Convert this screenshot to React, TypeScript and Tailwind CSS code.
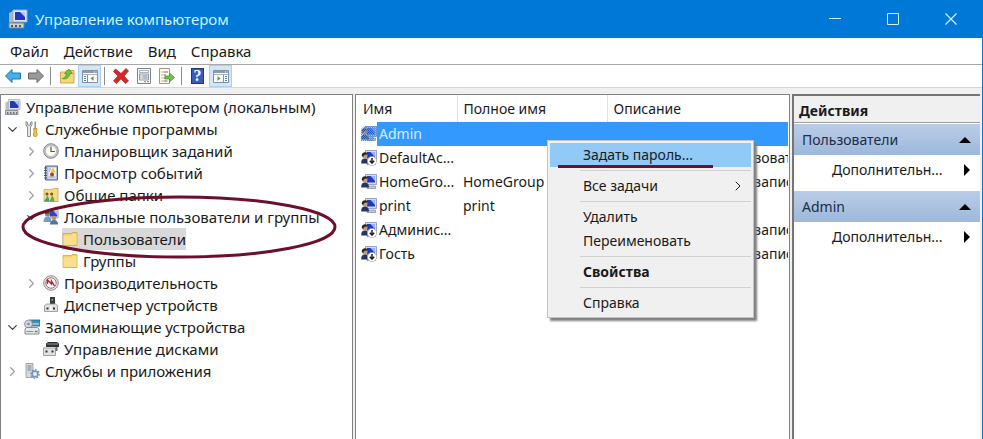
import React, { useState } from 'react';
import { ChevronDown, ChevronRight } from 'lucide-react';
import clsx from 'clsx';

interface TreeNode {
  label: string;
  depth: number;
  icon: React.ReactNode;
  state?: 'open' | 'closed';
}

interface LocalUser {
  name: string;
  fullName: string;
  description: string;
  disabled?: boolean;
}

const Icon: React.FC<{ children: React.ReactNode }> = ({ children }) => (
  <svg viewBox="0 0 16 16" className="h-4 w-4 shrink-0" aria-hidden="true">
    {children}
  </svg>
);

const ComputerIcon = () => (
  <Icon>
    <path d="M.5 3.500l3-1.500v9h-3z" fill="#b9bdc2" />
    <path d="M3.500.5h11.500v10H3.500z" fill="#dfe3ea" stroke="#a9afb8" strokeWidth=".8" />
    <path d="M5 2h8.500v7H5z" fill="#2337b8" />
    <path d="M9 2h4.500v5z" fill="#a9c0ff" />
    <path d="M.5 11.500h12.500v4H.5z" fill="#cfd2d6" stroke="#777d84" strokeWidth=".8" />
    <path d="M2 14h1.500M5 14h1.500M8 14h1.500M11 14h1" stroke="#4d535a" strokeWidth="1.500" />
  </Icon>
);

const ToolsIcon = () => (
  <Icon>
    <path d="M2 .5v3.500L3.500 6v9.500h3V6L8 4V.5L6.500 1.500v2.500h-3v-2.500z" fill="#e4e6e8" stroke="#7f8589" strokeWidth=".9" />
    <path d="M10.500.5h1.500v7h-1.500z" fill="#8a9094" />
    <path d="M9.500 7.500h3.500l-.5 3 .8 3.500-1 1.500h-2l-1-1.500.7-3.500z" fill="#f0c63c" stroke="#b78d1d" strokeWidth=".8" />
  </Icon>
);

const ClockIcon = () => (
  <Icon>
    <circle cx="8" cy="8" r="7.300" fill="#c9cbcd" stroke="#85898d" />
    <circle cx="8" cy="8" r="5.500" fill="#fdfdf4" stroke="#a5a8aa" strokeWidth=".7" />
    <path d="M8 3.500V8.500H12" fill="none" stroke="#4f5961" strokeWidth="1.200" />
  </Icon>
);

const EventIcon = () => (
  <Icon>
    <path d="M2.500 1h12v14h-12z" fill="#a9c0dd" stroke="#566a87" />
    <path d="M5.500 2.500h7.500v11H5.500z" fill="#f1f4f8" />
    <path d="M1 3h3M1 5.500h3M1 8h3M1 10.500h3M1 13h3" stroke="#4a5666" />
    <path d="M6 12h6.500M6 4h2M6 6h1" stroke="#8292a8" />
    <path d="M10 2.500l2.800 5H7.200z" fill="#f5c52c" />
    <circle cx="9" cy="9.500" r="2" fill="#cf3038" />
  </Icon>
);

const FolderIcon = () => (
  <Icon>
    <path d="M1 2.500h8l1.200-1H15v13H1z" fill="#f3cf6b" stroke="#d0a445" strokeWidth=".8" />
    <path d="M1.500 4.500h8l1-1.500h4v11h-13z" fill="#fbdf8c" />
  </Icon>
);

const SharedFolderIcon = () => (
  <Icon>
    <path d="M1 2.500h8l1.200-1H15v13H1z" fill="#f7d97f" stroke="#cda447" strokeWidth=".8" />
    <circle cx="4" cy="7" r="1.500" fill="#735032" />
    <circle cx="8.700" cy="7" r="1.500" fill="#735032" />
    <path d="M1 14.500c0-1 2.500-2.500 3-5.500 1.500 0 1.800 2 2.500 5.500z" fill="#3f9c82" />
    <path d="M6.500 14.500c0-1 1.800-2.500 2.200-5.500 1.500 0 2.300 2 2.800 5.500z" fill="#4fae4b" />
  </Icon>
);

const GroupIcon = () => (
  <Icon>
    <path d="M5.500.5h9.500v8.500H5.500z" fill="#d9dee7" stroke="#9299a8" strokeWidth=".8" />
    <path d="M7 2h7v5.500H7z" fill="#2b45c4" />
    <path d="M10.500 2H14v4z" fill="#a9bcff" />
    <circle cx="4.500" cy="5" r="2.500" fill="#a77b58" />
    <path d="M2 5c0-3.500 4.500-3.500 5-.5-2-.5-3 0-5 .5z" fill="#41332c" />
    <path d="M.5 13c0-3.500 1.500-5.500 4-5.500s4 2 4 5.500z" fill="#6f9ecb" />
    <circle cx="11" cy="9" r="2.200" fill="#b98e6e" />
    <path d="M7 15.500c0-3 1.500-4.500 4-4.500s4 1.500 4 4.500z" fill="#557593" />
  </Icon>
);

const PerformanceIcon = () => (
  <Icon>
    <circle cx="8" cy="8" r="7.300" fill="#e4e4e4" stroke="#8d8d8d" />
    <circle cx="8" cy="8" r="5.200" fill="#fff" stroke="#9a4a50" strokeWidth=".8" />
    <path d="M4.500 9V5l4 4V6l3 5" fill="none" stroke="#bd222c" strokeWidth="1.400" />
  </Icon>
);

const DeviceIcon = () => (
  <Icon>
    <path d="M7 0h5v7H7z" fill="#3a3d40" />
    <path d="M8.500 2h1.500v1.500H8.500z" fill="#a9adb0" />
    <path d="M1.500 8.500l2-1.500h9l2 1.500v6h-13z" fill="#dfe1e3" stroke="#8b8f92" strokeWidth=".8" />
    <path d="M3.500 10.500h2v2h-2zM10 10.500h2v2h-2z" fill="#33373a" />
    <path d="M7 8.500h1.500v5.500H7z" fill="#fff" />
  </Icon>
);

const StorageIcon = () => (
  <Icon>
    <path d="M5 1h11v6H5z" fill="#279ac6" stroke="#4b5a62" strokeWidth=".8" />
    <path d="M8 5h7" stroke="#d8f2ff" />
    <circle cx="4.500" cy="5" r="4" fill="#cfd6da" stroke="#818a90" strokeWidth=".8" />
    <circle cx="4.500" cy="5" r="1.300" fill="#4aa4c4" />
    <path d="M1 10l1.500-1.500h11L15 10v5H1z" fill="#e5e8ea" stroke="#6c7377" strokeWidth=".8" />
    <path d="M2.500 12.500h7" stroke="#8c9398" />
    <path d="M11 12.500h2.500" stroke="#36a13c" strokeWidth="1.500" />
  </Icon>
);

const DiskIcon = () => (
  <Icon>
    <path d="M3 2.500L5 1h9l2 1.500V6H3z" fill="#303336" />
    <path d="M4 3h11" stroke="#8f9396" />
    <path d="M.5 7h12v7.500H.5z" fill="#dfe1e3" stroke="#8b8f92" strokeWidth=".8" />
    <path d="M2.500 9.500h2v2h-2zM8.500 9.500h2v2h-2z" fill="#33373a" />
    <path d="M12.500 6h2v4h-2z" fill="#6a6e71" />
  </Icon>
);

const ServicesIcon = () => (
  <Icon>
    <path d="M2 .5h7v14H2z" fill="#d5dade" stroke="#8c959c" strokeWidth=".8" />
    <path d="M3.500 3h4M3.500 5h4M3.500 7h4" stroke="#7b858d" />
    <circle cx="11" cy="11" r="3" fill="#c9dcf0" stroke="#6d93bd" strokeWidth="1.500" />
    <circle cx="11" cy="11" r="4.300" fill="none" stroke="#6d93bd" strokeWidth="1.200" strokeDasharray="1.600 1.700" />
    <circle cx="11" cy="11" r="1.100" fill="#fff" />
  </Icon>
);

const UserIcon: React.FC<{ disabled?: boolean; selected?: boolean }> = ({ disabled, selected }) => (
  <Icon>
    <path d="M4.500.5h11v10h-11z" fill="#d5daea" stroke="#8890b0" strokeWidth=".8" />
    <path d="M6 2h8v6.500H6z" fill="#2038bd" />
    <path d="M9.500 2H14v5z" fill="#9cb4ff" />
    <path d="M6 12h8.500v2.500H6z" fill="#c5c8d2" stroke="#80859a" strokeWidth=".7" />
    <circle cx="3.800" cy="5.500" r="2.700" fill="#c79b7a" />
    <path d="M.8 6c-.5-4.500 5.500-5 6-1.500-2 0-4 0-4.500 2.500z" fill="#2f2326" />
    <path d="M.2 13.500c0-3.500 1-5 3.600-5s4.200 1.500 4.200 5z" fill="#26345f" />
    {disabled && (
      <>
        <circle cx="11" cy="11" r="4.600" fill="#fff" stroke="#a6a6a6" strokeWidth=".7" />
        <path d="M11 8v5M8.800 10.800L11 13.200l2.200-2.400" fill="none" stroke="#222" strokeWidth="1.500" />
      </>
    )}
    {selected && (
      <>
        <defs>
          <pattern id="dither" width="2" height="2" patternUnits="userSpaceOnUse">
            <path d="M0 0h1v1H0zM1 1h1v1H1z" fill="#3399ff" />
          </pattern>
        </defs>
        <path d="M4 0h12v11h-3v4H0V3z" fill="#3399ff" opacity=".35" />
        <path d="M4 0h12v11h-3v4H0V3z" fill="url(#dither)" />
      </>
    )}
  </Icon>
);

const ArrowIcon: React.FC<{ forward?: boolean }> = ({ forward }) => (
  <Icon>
    <path
      d={forward ? 'M15.500 8L9 1.500v3.500H.5v6H9v3.500z' : 'M.5 8L7 1.500v3.500h8.500v6H7v3.500z'}
      fill={forward ? '#9a9a9a' : '#45b0ea'}
      stroke={forward ? '#666' : '#1976ad'}
    />
  </Icon>
);

const UpFolderIcon = () => (
  <Icon>
    <path d="M1.500 4h5l1-1.500h7.500V15H1.500z" fill="#f6d77b" stroke="#c7a146" strokeWidth=".9" />
    <path d="M3 10.500c2 0 4-2 4.500-5H5.500L10 1l3.500 4.500h-2.500c-.5 4-4 6.500-8 5z" fill="#6cc340" stroke="#478f2a" strokeWidth=".7" />
  </Icon>
);

const PaneIcon: React.FC<{ right?: boolean }> = ({ right }) => (
  <Icon>
    <path d="M.5 2.500h15v12H.5z" fill="#fff" stroke="#8590a0" />
    <path d="M1 3h14v2H1z" fill="#8f9bab" />
    <path d="M1 6.500h14" stroke="#a9b2bf" />
    <path d="M12 4h1M14 4h.5" stroke="#fff" />
    <path d={right ? 'M10.500 7v7' : 'M5.500 7v7'} stroke="#8590a0" />
    <path d={right ? 'M12 8.500h2M12 10.500h2M12 12.500h2' : 'M2 8.500h2M2 10.500h2M2 12.500h2'} stroke="#4b86c8" />
    <path d={right ? 'M4.500 8v5L7.500 10.500z' : 'M11.500 8v5L8.500 10.500z'} fill="#42a83c" />
  </Icon>
);

const DeleteIcon = () => (
  <Icon>
    <path d="M2.500 1L8 5.500 13 .5 15.500 3 11 8l4.500 5-3 2.500L8 10.800 3.500 15.500 .5 13 5 8 .5 3.500z" fill="#dc2626" stroke="#9c1a1a" strokeWidth=".7" />
  </Icon>
);

const PropertiesIcon = () => (
  <Icon>
    <path d="M1.500.5h13v15h-13z" fill="#fafafa" stroke="#7c858e" />
    <path d="M3.500 2.500h9v2h-9z" fill="none" stroke="#98a2ac" strokeWidth=".8" />
    <path d="M3.500 6h9v6h-9z" fill="#eef1f4" stroke="#7c858e" strokeWidth=".8" />
    <path d="M4.500 8h1M6.500 8h5M4.500 10h1M6.500 10h5M8 13.700h2M11 13.700h2" stroke="#7c858e" />
  </Icon>
);

const ExportIcon = () => (
  <Icon>
    <path d="M.5.5h10v15H.5z" fill="#fffbe9" stroke="#9c9a83" />
    <path d="M2.500 4h1M4.500 4h4.500M2.500 7h1M4.500 7H7M2.500 10h1M4.500 10H6M2.500 13h1M4.500 13h4" stroke="#69758a" />
    <path d="M6 8h4.500V5l5 4.500-5 4.500v-3H6z" fill="#6cc93f" stroke="#3f8f2b" strokeWidth=".7" />
  </Icon>
);

const HelpIcon = () => (
  <span className="flex h-4 w-[13px] items-center justify-center border border-[#22367c] bg-[#3a5bbd] font-['Liberation_Serif',serif] text-base font-bold leading-4 text-white">?</span>
);

const TREE: TreeNode[] = [
  { label: 'Управление компьютером (локальным)', depth: 0, icon: <ComputerIcon /> },
  { label: 'Служебные программы', depth: 1, icon: <ToolsIcon />, state: 'open' },
  { label: 'Планировщик заданий', depth: 2, icon: <ClockIcon />, state: 'closed' },
  { label: 'Просмотр событий', depth: 2, icon: <EventIcon />, state: 'closed' },
  { label: 'Общие папки', depth: 2, icon: <SharedFolderIcon />, state: 'closed' },
  { label: 'Локальные пользователи и группы', depth: 2, icon: <GroupIcon />, state: 'open' },
  { label: 'Пользователи', depth: 3, icon: <FolderIcon /> },
  { label: 'Группы', depth: 3, icon: <FolderIcon /> },
  { label: 'Производительность', depth: 2, icon: <PerformanceIcon />, state: 'closed' },
  { label: 'Диспетчер устройств', depth: 2, icon: <DeviceIcon /> },
  { label: 'Запоминающие устройства', depth: 1, icon: <StorageIcon />, state: 'open' },
  { label: 'Управление дисками', depth: 2, icon: <DiskIcon /> },
  { label: 'Службы и приложения', depth: 1, icon: <ServicesIcon />, state: 'closed' },
];

const USERS: LocalUser[] = [
  { name: 'Admin', fullName: '', description: '' },
  { name: 'DefaultAc...', fullName: '', description: 'Учетная запись пользователя', disabled: true },
  { name: 'HomeGro...', fullName: 'HomeGroup', description: 'Встроенная учетная запись' },
  { name: 'print', fullName: 'print', description: '' },
  { name: 'Админис...', fullName: '', description: 'Встроенная учетная запись', disabled: true },
  { name: 'Гость', fullName: '', description: 'Встроенная учетная запись', disabled: true },
];

// Left padding per tree level, level 0 has no expander
const INDENT = ['pl-1', 'pl-1', 'pl-[23px]', 'pl-[42px]'];

const TitleBar = () => (
  <header className="flex h-[38px] items-center bg-[#0078d7] pl-2 text-[#c9f4ff]">
    <svg viewBox="0 0 20 20" className="h-5 w-5" aria-hidden="true">
      <path d="M1 4l4-2v12H1z" fill="#a9b4bf" />
      <path d="M5 1h14v12H5z" fill="#dfe6f2" stroke="#9eabbb" />
      <path d="M7 3h10v8H7z" fill="#2036bd" />
      <path d="M12 3h5v5z" fill="#b3c8ff" />
      <path d="M1 14h15v5H1z" fill="#cfd2d2" stroke="#73818c" />
      <path d="M3 17h2M7 17h2M11 17h2" stroke="#57534a" strokeWidth="2" />
    </svg>
    <h1 className="ml-[7px] flex-1">Управление компьютером</h1>
    <button type="button" aria-label="Свернуть" className="flex h-full w-[58px] items-center justify-center">
      <svg viewBox="0 0 12 12" className="h-3 w-3"><path d="M0 5.500h12" stroke="currentColor" /></svg>
    </button>
    <button type="button" aria-label="Развернуть" className="flex h-full w-[58px] items-center justify-center">
      <svg viewBox="0 0 12 12" className="h-3 w-3"><path d="M.5.5h11v11H.5z" fill="none" stroke="currentColor" /></svg>
    </button>
    <button type="button" aria-label="Закрыть" className="mr-[2px] flex h-full w-[58px] items-center justify-center">
      <svg viewBox="0 0 12 12" className="h-3 w-3"><path d="M.5.5l11 11M11.500.5l-11 11" stroke="currentColor" strokeWidth="1.200" /></svg>
    </button>
  </header>
);

const ToolButton: React.FC<{ label: string; pressed?: boolean; children: React.ReactNode }> = ({ label, pressed, children }) => (
  <button
    type="button"
    aria-label={label}
    className={clsx(
      'flex h-[22px] w-[23px] items-center justify-center border',
      pressed ? 'border-[#a9d0f0] bg-[#d3e6f7]' : 'border-transparent'
    )}
  >
    {children}
  </button>
);

const ToolDivider = () => <span className="ml-[3px] mr-1 h-[18px] w-px bg-[#8c8c8c]" />;

const Toolbar = () => (
  <div className="flex h-[23px] items-center border-b border-[#d5d5d5] pl-px">
    <ToolButton label="Назад"><ArrowIcon /></ToolButton>
    <ToolButton label="Вперед"><ArrowIcon forward /></ToolButton>
    <ToolDivider />
    <ToolButton label="Вверх"><UpFolderIcon /></ToolButton>
    <ToolButton label="Дерево консоли" pressed><PaneIcon /></ToolButton>
    <ToolDivider />
    <ToolButton label="Удалить"><DeleteIcon /></ToolButton>
    <ToolButton label="Свойства"><PropertiesIcon /></ToolButton>
    <ToolButton label="Экспорт списка"><ExportIcon /></ToolButton>
    <ToolDivider />
    <ToolButton label="Справка"><HelpIcon /></ToolButton>
    <ToolButton label="Панель действий" pressed><PaneIcon right /></ToolButton>
  </div>
);

const ConsoleTree = () => {
  const [selected, setSelected] = useState('Пользователи');

  return (
    <nav className="relative w-[353px] shrink-0 border border-b-0 border-[#828282] bg-white pt-px">
      <ul>
        {TREE.map(node => (
          <li key={node.label} className={clsx('flex h-[22px] items-center', INDENT[node.depth])}>
            {node.depth > 0 && (
              <span className="flex w-[19px] shrink-0 items-center">
                {node.state === 'open' && (
                  <button type="button" aria-label="Свернуть узел"><ChevronDown size={15} className="text-[#404040]" /></button>
                )}
                {node.state === 'closed' && (
                  <button type="button" aria-label="Развернуть узел"><ChevronRight size={15} className="text-[#a0a0a0]" /></button>
                )}
              </span>
            )}
            <button
              type="button"
              onClick={() => setSelected(node.label)}
              className={clsx('flex h-[22px] items-center gap-[5px] whitespace-nowrap', selected === node.label && 'bg-[#d9d9d9]')}
            >
              {node.icon}
              {node.label}
            </button>
          </li>
        ))}
      </ul>
      {/* Hand-drawn highlight around the users branch */}
      <svg viewBox="0 0 316 64" className="pointer-events-none absolute left-5 top-[100px] h-16 w-[316px]" aria-hidden="true">
        <ellipse cx="158" cy="32" rx="156" ry="30" fill="none" stroke="#6b0f2a" strokeWidth="3" />
      </svg>
    </nav>
  );
};

const MenuItem: React.FC<{ label: string; active?: boolean; bold?: boolean; submenu?: boolean }> = ({ label, active, bold, submenu }) => (
  <button
    type="button"
    role="menuitem"
    className={clsx('flex h-6 w-full items-center justify-between pl-[33px] pr-[5px]', active && 'bg-[#91c9f7]', bold && 'font-bold')}
  >
    {label}
    {submenu && <ChevronRight size={16} strokeWidth={1.5} />}
  </button>
);

const MenuDivider = () => <div className="my-[3px] ml-[30px] h-px bg-[#d0d0d0]" />;

const ContextMenu = () => (
  <div role="menu" className="absolute left-[191px] top-[45px] w-[207px] border border-[#c4c4c4] bg-[#f0f0f0] p-[2px] shadow-[3px_3px_2px_#808080]">
    <div className="relative">
      <MenuItem label="Задать пароль..." active />
      <span className="absolute bottom-[-1px] left-2 h-[3px] w-[155px] bg-[#730f35]" />
    </div>
    <MenuDivider />
    <MenuItem label="Все задачи" submenu />
    <MenuDivider />
    <MenuItem label="Удалить" />
    <MenuItem label="Переименовать" />
    <MenuDivider />
    <MenuItem label="Свойства" bold />
    <MenuDivider />
    <MenuItem label="Справка" />
  </div>
);

const UserList = () => (
  <main className="relative min-w-0 flex-1 border border-b-0 border-[#828282] bg-white pr-px text-sm">
    <table className="w-full table-fixed border-collapse text-left">
      <colgroup>
        <col className="w-[101px]" />
        <col className="w-[150px]" />
        <col />
      </colgroup>
      <thead>
        <tr className="h-[27px]">
          <th className="border-r border-[#e2e2e2] p-0 pl-[7px] font-normal">Имя</th>
          <th className="border-r border-[#e2e2e2] p-0 pl-[6px] font-normal">Полное имя</th>
          <th className="p-0 pl-[6px] font-normal">Описание</th>
        </tr>
      </thead>
      <tbody>
        {USERS.map((user, i) => (
          <tr key={user.name} className="h-6">
            <td className="p-0 pl-[5px]">
              <div className="flex h-6 items-center">
                <UserIcon disabled={user.disabled} selected={i === 0} />
                <span className={clsx('h-6 flex-1 whitespace-nowrap pl-[2px] leading-6', i === 0 && 'bg-[#3399ff] text-[#d5efff]')}>
                  {user.name}
                </span>
              </div>
            </td>
            <td className={clsx('overflow-hidden whitespace-nowrap p-0 pl-[6px]', i === 0 && 'bg-[#3399ff]')}>{user.fullName}</td>
            <td className={clsx('overflow-hidden whitespace-nowrap p-0 pl-[6px]', i === 0 && 'bg-[#3399ff]')}>{user.description}</td>
          </tr>
        ))}
      </tbody>
    </table>
    <ContextMenu />
  </main>
);

const ActionGroup: React.FC<{ title: string }> = ({ title }) => (
  <section className="mb-[6px]">
    <button
      type="button"
      className="flex h-[31px] w-full items-center justify-between bg-linear-to-b from-[#bacde7] to-[#9db8db] pl-2 pr-[9px] text-[#1c2c48]"
    >
      {title}
      <svg viewBox="0 0 12 6" className="h-[6px] w-3" aria-hidden="true"><path d="M6 0l6 6H0z" fill="#000" /></svg>
    </button>
    <button type="button" className="flex h-[30px] w-full items-center justify-between pl-[38px] pr-[10px]">
      Дополнительн...
      <svg viewBox="0 0 6 12" className="h-3 w-[6px]" aria-hidden="true"><path d="M0 0l6 6-6 6z" fill="#000" /></svg>
    </button>
  </section>
);

const ActionsPane = () => (
  <aside className="w-[188px] shrink-0 border-l-2 border-t-2 border-[#757575] bg-white text-sm">
    <h2 className="h-[27px] border-b border-[#a0a0a0] bg-[#f0f0f0] pl-[5px] font-bold leading-[29px]">Действия</h2>
    <div className="pt-px">
      <ActionGroup title="Пользователи" />
      <ActionGroup title="Admin" />
    </div>
  </aside>
);

const App: React.FC = () => (
  <div className="flex min-h-screen flex-col border-r border-[#0078d7] bg-white font-['Noto_Sans','Open_Sans',sans-serif] text-[15px] leading-5 text-[#1a1a1a]">
    <TitleBar />
    <div className="flex h-[27px] items-center gap-[15px] border-b border-[#a8a8a8] pl-[10px]">
      {['Файл', 'Действие', 'Вид', 'Справка'].map(item => (
        <button key={item} type="button">{item}</button>
      ))}
    </div>
    <Toolbar />
    <div className="flex flex-1 gap-[2px] bg-[#f0f0f0] pr-[2px] pt-[6px]">
      <ConsoleTree />
      <UserList />
      <ActionsPane />
    </div>
  </div>
);

export default App;
